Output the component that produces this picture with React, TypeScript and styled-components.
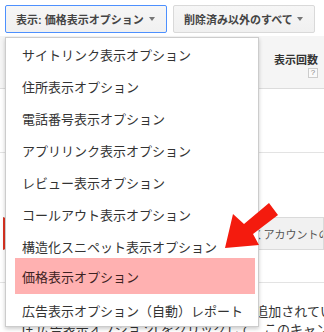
import React from 'react';
import styled, { createGlobalStyle } from 'styled-components';

const GlobalStyle = createGlobalStyle`
    html, body {
        margin: 0;
        padding: 0;
        background: #fff;
    }
    body {
        width: 324px;
        height: 332px;
        overflow: hidden;
        font-family: "Liberation Sans", "Noto Sans CJK JP", sans-serif;
    }
`;

const menuItems = [
    'サイトリンク表示オプション',
    '住所表示オプション',
    '電話番号表示オプション',
    'アプリリンク表示オプション',
    'レビュー表示オプション',
    'コールアウト表示オプション',
    '構造化スニペット表示オプション',
    '価格表示オプション',
    '広告表示オプション（自動）レポート',
];

const App = () => {
    return (
        <Page>
            <GlobalStyle />
            <Toolbar>
                <ToolButton $active $width={162}>
                    表示: 価格表示オプション
                    <Caret />
                </ToolButton>
                <ToolButton $width={142}>
                    削除済み以外のすべて
                    <Caret />
                </ToolButton>
            </Toolbar>

            <TableHeader>
                <HeaderCell>
                    <HeaderLabel>表示回数</HeaderLabel>
                    <HelpBox>?</HelpBox>
                </HeaderCell>
            </TableHeader>
            <EmptyRow />
            <AlertWrap>
                <Alert>この価格表示オプションは、キャンペーンではなくアカウントのレベルで設定されています。</Alert>
            </AlertWrap>
            <EmptyRow $height={32} />
            <Notice>
                このキャンペーンには表示オプションが追加されていません。
                <br />
                [+ 広告表示オプション] をクリックして、このキャンペーンに追加してください。
            </Notice>

            <Menu>
                {menuItems.map((label) => (
                    <MenuItem key={label} $selected={label === '価格表示オプション'}>
                        {label}
                    </MenuItem>
                ))}
            </Menu>

            <Arrow width="60" height="52" viewBox="0 0 60 52">
                <polygon points="3,48 11,14 22,24 47,3 56,15 31,34 37,45" fill="#f41b0e" />
            </Arrow>
        </Page>
    );
};

export default App;

const Page = styled.div`
    position: relative;
    width: 324px;
    height: 332px;
    overflow: hidden;
`;

const Toolbar = styled.div`
    display: flex;
    gap: 6px;
    padding: 5px 0 3px 5px;
`;

const ToolButton = styled.div<{ $active?: boolean; $width: number }>`
    display: inline-flex;
    align-items: center;
    justify-content: space-between;
    box-sizing: border-box;
    width: ${(props) => props.$width}px;
    height: 28px;
    padding: 0 11px 0 10px;
    border: 1px solid ${(props) => (props.$active ? '#4d90fe' : '#d9d9d9')};
    border-radius: 2px;
    background: linear-gradient(#f6f6f6, #f0f0f0);
    color: #444;
    font-size: 11px;
    font-weight: 700;
    white-space: nowrap;
`;

const Caret = styled.span`
    width: 0;
    height: 0;
    border-left: 3.5px solid transparent;
    border-right: 3.5px solid transparent;
    border-top: 4px solid #777;
`;

const TableHeader = styled.div`
    display: flex;
    justify-content: flex-end;
    box-sizing: border-box;
    height: 53px;
    background: #f5f5f5;
    border-bottom: 1px solid #dcdcdc;
`;

const HeaderCell = styled.div`
    display: flex;
    flex-direction: column;
    align-items: flex-end;
    padding: 17px 6px 0 0;
`;

const HeaderLabel = styled.div`
    font-size: 11px;
    line-height: 14px;
    font-weight: 700;
    color: #333;
`;

const HelpBox = styled.div`
    display: flex;
    align-items: center;
    justify-content: center;
    box-sizing: border-box;
    width: 10px;
    height: 10px;
    margin-top: 1px;
    border: 1px solid #ccc;
    background: #fafafa;
    color: #888;
    font-size: 8px;
    line-height: 1;
`;

const EmptyRow = styled.div<{ $height?: number }>`
    height: ${(props) => props.$height ?? 63}px;
    border-bottom: 1px solid #e3e3e3;
`;

const AlertWrap = styled.div`
    padding: 64px 0 0 3px;
`;

const Alert = styled.div`
    display: flex;
    align-items: center;
    box-sizing: border-box;
    height: 33px;
    padding-left: 6px;
    background: #f1f1f1;
    border: 1px solid #dadada;
    border-left: 2px solid #dd3322;
    color: #555;
    font-size: 11px;
    white-space: nowrap;
    overflow: hidden;
`;

const Notice = styled.p`
    margin: 20px 0 0;
    padding-left: 22px;
    color: #333;
    font-size: 13px;
    line-height: 18px;
    white-space: nowrap;
`;

const Menu = styled.div`
    position: absolute;
    top: 37px;
    left: 5px;
    width: 254px;
    box-sizing: border-box;
    background: #fff;
    border: 1px solid rgba(0, 0, 0, 0.2);
    box-shadow: 0 2px 4px rgba(0, 0, 0, 0.2);
`;

const MenuItem = styled.div<{ $selected?: boolean }>`
    display: flex;
    align-items: center;
    height: ${(props) => (props.$selected ? 36 : 32)}px;
    margin: ${(props) => (props.$selected ? '-4px 3px 0 9px' : '0')};
    padding-left: ${(props) => (props.$selected ? 7 : 16)}px;
    background: ${(props) => (props.$selected ? '#ffb1b1' : 'transparent')};
    color: ${(props) => (props.$selected ? '#3d2222' : '#333')};
    font-size: 13px;
    white-space: nowrap;
`;

const Arrow = styled.svg`
    position: absolute;
    left: 222px;
    top: 200px;
`;
